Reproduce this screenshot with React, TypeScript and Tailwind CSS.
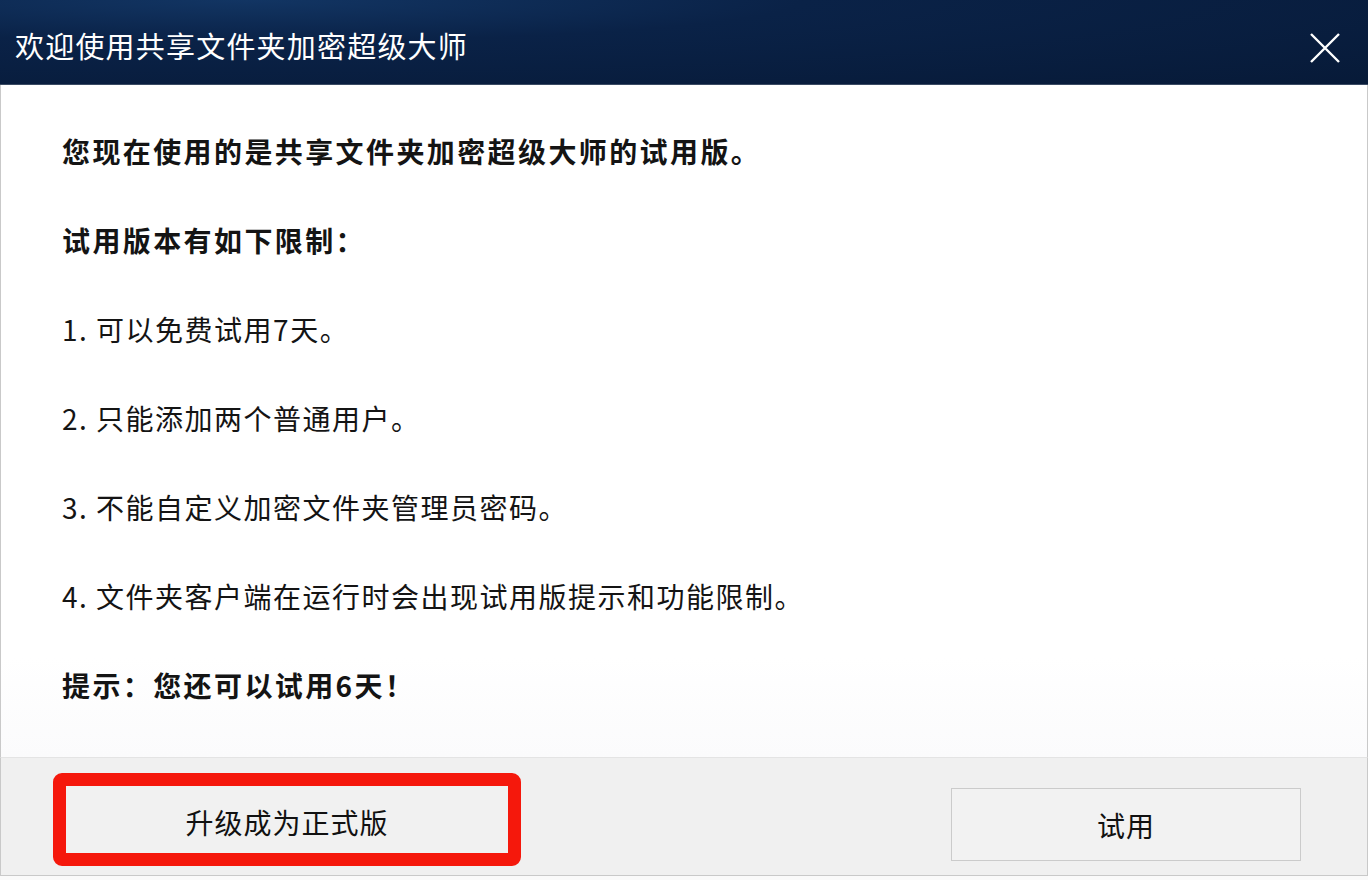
export default function App() {
  const lines: { text: string; bold?: boolean }[] = [
    { text: '您现在使用的是共享文件夹加密超级大师的试用版。', bold: true },
    { text: '试用版本有如下限制：', bold: true },
    { text: '1. 可以免费试用7天。' },
    { text: '2. 只能添加两个普通用户。' },
    { text: '3. 不能自定义加密文件夹管理员密码。' },
    { text: '4. 文件夹客户端在运行时会出现试用版提示和功能限制。' },
    { text: '提示：您还可以试用6天！', bold: true },
  ];

  return (
    <div className="flex h-[880px] w-[1368px] flex-col overflow-hidden bg-white font-['Noto_Sans_CJK_SC','Noto_Sans',sans-serif]">
      {/* title bar */}
      <div className="flex h-[85px] shrink-0 items-center justify-between border-b border-[#3a4a63] bg-[radial-gradient(ellipse_at_18%_0%,#123563_0%,#0a2247_35%,#071a38_100%)] pl-[15px] pr-[28px] pt-[6px]">
        <span className="text-[29px] leading-none tracking-[1.2px] text-white">欢迎使用共享文件夹加密超级大师</span>
        <svg width="30" height="30" viewBox="0 0 30 30" className="mt-[6px] text-white">
          <path d="M1 1 L29 29 M29 1 L1 29" stroke="currentColor" strokeWidth="2.4" fill="none" />
        </svg>
      </div>

      {/* content */}
      <div className="flex flex-1 flex-col border-x border-[#c9c9c9] bg-[linear-gradient(to_bottom,#ffffff_85%,#fbfbfc_100%)] px-[61px] pt-[22px]">
        {lines.map((l) => (
          <p
            key={l.text}
            className={`h-[89px] text-[28px] leading-[89px] text-[#141414] ${l.bold ? 'font-bold tracking-[2.4px]' : 'font-normal tracking-[1.5px]'}`}
          >
            {l.text}
          </p>
        ))}
      </div>

      {/* footer */}
      <div className="flex h-[119px] shrink-0 items-start justify-between border-x border-t border-b border-[#c9c9c9] border-t-[#e4e4e4] bg-[#f0f0f0] pl-[52px] pr-[66px]">
        <div className="mt-[15px] rounded-[9px] border-[13px] border-[#f5180c]">
          <button className="flex h-[67px] w-[442px] items-center justify-center bg-[#f1f1f1] pt-[4px] text-[28px] tracking-[1px] text-[#111]">
            升级成为正式版
          </button>
        </div>
        <button className="mt-[30px] flex h-[73px] w-[350px] items-center justify-center border border-[#cbcbcb] bg-[#f2f2f2] text-[28px] tracking-[1px] text-[#111]">
          试用
        </button>
      </div>
      <div className="h-[4px] shrink-0 bg-[#fafafa]" />
    </div>
  );
}
